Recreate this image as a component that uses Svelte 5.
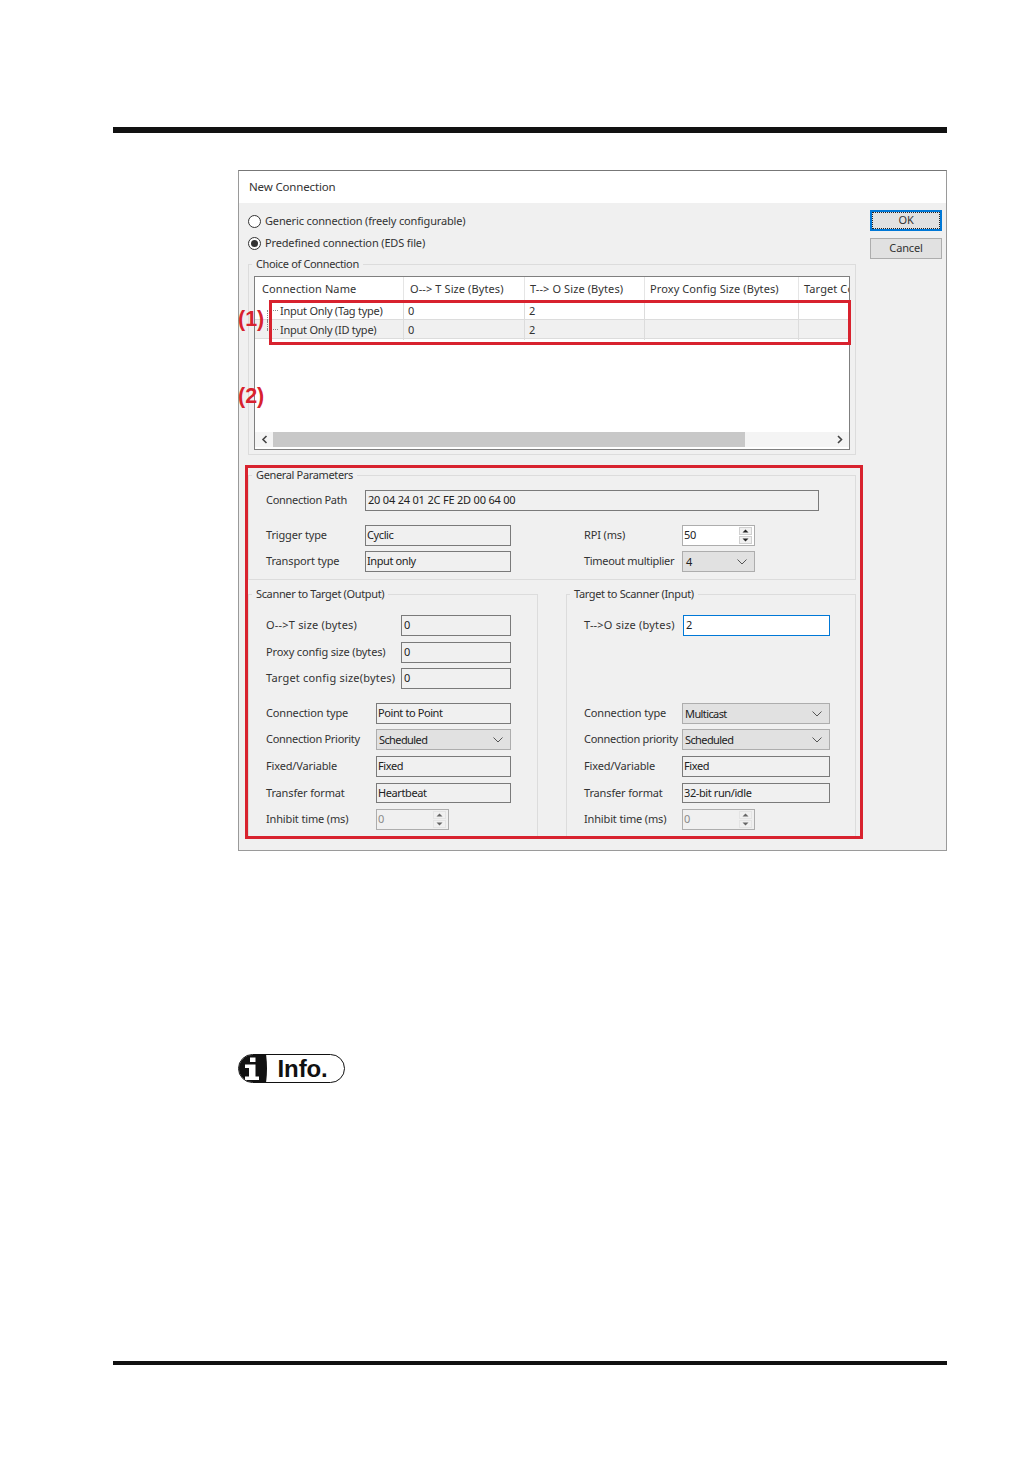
<script>
	const columns = ['Connection Name', 'O--> T Size (Bytes)', 'T--> O Size (Bytes)', 'Proxy Config Size (Bytes)', 'Target Config Size (Bytes)']
	const rows = [
		['Input Only (Tag type)', '0', '2', '', ''],
		['Input Only (ID type)', '0', '2', '', '']
	]
</script>

{#snippet text(value, width, cls = '')}
	<div class="field {width} {cls}">{value}</div>
{/snippet}

{#snippet combo(value, width)}
	<div class="field combo {width}">
		<span>{value}</span>
		<svg width="10" height="6" viewBox="0 0 10 6"><path d="M0.5 0.5 L5 5 L9.5 0.5" fill="none" stroke="#555" /></svg>
	</div>
{/snippet}

{#snippet spin(value, disabled)}
	<div class="field spin w73" class:disabled>
		<span>{value}</span>
		<div class="arrows">
			<svg width="13" height="7" viewBox="0 0 13 7"><path d="M3.5 5 L6.5 2 L9.5 5 Z" fill={disabled ? '#666' : '#222'} /></svg>
			<svg width="13" height="7" viewBox="0 0 13 7"><path d="M3.5 2 L6.5 5 L9.5 2 Z" fill={disabled ? '#666' : '#222'} /></svg>
		</div>
	</div>
{/snippet}

<div class="page">
	<div class="rule top"></div>

	<div class="content">
		<div class="dialog">
			<div class="title">New Connection</div>

			<div class="body">
				<div class="main">
					<label class="radio-row"><span class="radio"></span><span class="radio-text">Generic connection (freely configurable)</span></label>
					<label class="radio-row"><span class="radio on"></span><span class="radio-text">Predefined connection (EDS file)</span></label>

					<section class="group choice">
						<div class="legend">Choice of Connection</div>
						<div class="table">
							<div class="head tr">
								{#each columns as col}
									<div class="th">{col}</div>
								{/each}
							</div>
							{#each rows as row, i}
								<div class="tr item" class:alt={i === 1}>
									{#each row as cell, j}
										<div class="td" class:name={j === 0}>{cell}</div>
									{/each}
								</div>
							{/each}
							<div class="filler"></div>
							<div class="scrollbar">
								<svg width="18" height="15" viewBox="0 0 18 15"><path d="M11.5 4 L8 7.5 L11.5 11" fill="none" stroke="#444" stroke-width="1.6" /></svg>
								<div class="thumb"></div>
								<svg class="next" width="18" height="15" viewBox="0 0 18 15"><path d="M8 4 L11.5 7.5 L8 11" fill="none" stroke="#444" stroke-width="1.6" /></svg>
							</div>
						</div>
					</section>

					<section class="group general">
						<div class="legend">General Parameters</div>
						<div class="row path">
							<span class="label l99 tight">Connection Path</span>
							{@render text('20 04 24 01 2C FE 2D 00 64 00', 'w454')}
						</div>
						<div class="two m14">
							<div class="row">
								<span class="label l99">Trigger type</span>
								{@render text('Cyclic', 'w146')}
							</div>
							<div class="row">
								<span class="label l98">RPI (ms)</span>
								{@render spin('50', false)}
							</div>
						</div>
						<div class="two m5">
							<div class="row">
								<span class="label l99">Transport type</span>
								{@render text('Input only', 'w146')}
							</div>
							<div class="row">
								<span class="label l98 tight">Timeout multiplier</span>
								{@render combo('4', 'w73')}
							</div>
						</div>
					</section>

					<div class="columns">
						<section class="group side">
							<div class="legend">Scanner to Target (Output)</div>
							<div class="row first"><span class="label l135 loose">O-->T size (bytes)</span>{@render text('0', 'w110')}</div>
							<div class="row m6"><span class="label l135">Proxy config size (bytes)</span>{@render text('0', 'w110')}</div>
							<div class="row m5"><span class="label l135 loose">Target config size(bytes)</span>{@render text('0', 'w110')}</div>
							<div class="row m14"><span class="label l110">Connection type</span>{@render text('Point to Point', 'w135')}</div>
							<div class="row m5"><span class="label l110 tight">Connection Priority</span>{@render combo('Scheduled', 'w135')}</div>
							<div class="row m6"><span class="label l110">Fixed/Variable</span>{@render text('Fixed', 'w135')}</div>
							<div class="row m6 short"><span class="label l110">Transfer format</span>{@render text('Heartbeat', 'w135')}</div>
							<div class="row m6"><span class="label l110">Inhibit time (ms)</span>{@render spin('0', true)}</div>
						</section>

						<section class="group side">
							<div class="legend">Target to Scanner (Input)</div>
							<div class="row first"><span class="label l98 loose">T-->O size (bytes)</span>{@render text('2', 'w147', 'focus')}</div>
							<div class="row m67"><span class="label l98">Connection type</span>{@render combo('Multicast', 'w148')}</div>
							<div class="row m5"><span class="label l98 tight">Connection priority</span>{@render combo('Scheduled', 'w148')}</div>
							<div class="row m6"><span class="label l98">Fixed/Variable</span>{@render text('Fixed', 'w148')}</div>
							<div class="row m6 short"><span class="label l98">Transfer format</span>{@render text('32-bit run/idle', 'w148')}</div>
							<div class="row m6"><span class="label l98">Inhibit time (ms)</span>{@render spin('0', true)}</div>
						</section>
					</div>
				</div>

				<div class="buttons">
					<button class="default"><span>OK</span></button>
					<button>Cancel</button>
				</div>
			</div>

			<div class="callout box-one"></div>
			<div class="callout box-two"></div>
			<div class="mark mark-one">(1)</div>
			<div class="mark mark-two">(2)</div>
		</div>

		<div class="info">
			<svg class="info-icon" width="30" height="29" viewBox="0 0 30 29">
				<path d="M14.5 0 H28 Q30 14.5 28 29 H14.5 A14.5 14.5 0 0 1 14.5 0 Z" fill="#111" />
				<path d="M12 3.5 h5.5 v4.5 h-5.5 z M7 10.5 h10.5 v12 h3.5 v3.5 h-14 v-3.5 h4 v-8.5 h-4 z" fill="#fff" />
			</svg>
			<span class="info-text">Info.</span>
		</div>
	</div>

	<div class="rule bottom"></div>
</div>

<style>
	:global(body) {
		background: #fff;
	}

	.page {
		box-sizing: border-box;
		width: 1032px;
		height: 1457px;
		padding: 127px 85px 0 113px;
		overflow: hidden;
		font-family: 'Noto Sans', sans-serif;
		font-size: 11px;
		letter-spacing: -0.15px;
		color: #333;
	}

	.rule {
		background: #111;
	}

	.rule.top {
		height: 6px;
	}

	.rule.bottom {
		height: 4px;
		margin-top: 278px;
	}

	.content {
		padding: 37px 0 0 125px;
	}

	.dialog {
		position: relative;
		box-sizing: border-box;
		width: 709px;
		height: 681px;
		border: 1px solid #9a9a9a;
		border-top-color: #777;
		background: #f0f0f0;
	}

	.title {
		box-sizing: border-box;
		height: 32px;
		padding: 7px 0 0 10px;
		background: #fff;
		font-size: 11.5px;
		line-height: 17px;
	}

	.body {
		display: flex;
	}

	.main {
		width: 608px;
		margin-left: 9px;
		padding-top: 7px;
	}

	.radio-row {
		display: flex;
		align-items: center;
		gap: 4px;
		height: 22px;
	}

	.radio-text {
		margin-top: -2px;
	}

	.radio {
		position: relative;
		box-sizing: border-box;
		width: 13px;
		height: 13px;
		border: 1px solid #333;
		border-radius: 50%;
		background: #fff;
	}

	.radio.on::after {
		content: '';
		position: absolute;
		inset: 2px;
		border-radius: 50%;
		background: #333;
	}

	.group {
		border: 1px solid #dcdcdc;
	}

	.legend {
		width: fit-content;
		height: 16px;
		margin: -9px 0 0 3px;
		padding: 0 4px;
		background: #f0f0f0;
		line-height: 16px;
		letter-spacing: -0.35px;
		white-space: nowrap;
	}

	.choice {
		box-sizing: border-box;
		height: 191px;
		margin-top: 10px;
		padding: 0 5px;
	}

	.choice .legend {
		margin-left: -2px;
	}

	.table {
		display: flex;
		flex-direction: column;
		box-sizing: border-box;
		width: 596px;
		height: 174px;
		margin-top: 4px;
		border: 1px solid #7f7f7f;
		background: #fff;
		overflow: hidden;
	}

	.tr {
		display: grid;
		grid-template-columns: 149px 121px 120px 154px 50px;
		flex: none;
	}

	.head {
		height: 24px;
	}

	.th {
		padding: 3px 0 0 6px;
		border-right: 1px solid #e5e5e5;
		line-height: 17px;
		letter-spacing: 0.1px;
		white-space: nowrap;
	}

	.th:first-child {
		padding-left: 7px;
	}

	.th:nth-child(n + 3) {
		padding-left: 5px;
	}

	.th:last-child {
		border-right: 0;
		overflow: hidden;
	}

	.item {
		height: 19px;
		border-bottom: 1px solid #dcdcdc;
		box-sizing: border-box;
	}

	.item.alt {
		background: #f0f0f0;
	}

	.td {
		padding-left: 4px;
		border-right: 1px solid #dcdcdc;
		line-height: 20px;
		letter-spacing: -0.25px;
		white-space: nowrap;
	}

	.td.name {
		position: relative;
		padding-left: 25px;
	}

	.td.name::before {
		content: '';
		position: absolute;
		left: 12px;
		top: 9px;
		width: 11px;
		border-top: 1px dotted #888;
	}

	.td.name::after {
		content: '';
		position: absolute;
		left: 12px;
		top: 9px;
		bottom: -1px;
		border-left: 1px dotted #888;
	}

	.alt .td.name::after {
		top: 0;
		bottom: 9px;
	}

	.td:last-child {
		border-right: 0;
	}

	.filler {
		height: 93px;
		flex: none;
	}

	.scrollbar {
		display: flex;
		flex: none;
		height: 15px;
		background: #f4f4f4;
	}

	.thumb {
		width: 472px;
		background: #c8c8c8;
	}

	.next {
		margin-left: auto;
		margin-right: 1px;
	}

	.general {
		box-sizing: border-box;
		height: 105px;
		margin-top: 20px;
	}

	.row {
		display: flex;
		align-items: center;
		height: 21px;
	}

	.row.short {
		height: 20px;
	}

	.short .field {
		height: 20px;
	}

	.path {
		margin: 7px 0 0 17px;
	}

	.two {
		display: grid;
		grid-template-columns: 318px auto;
		padding-left: 17px;
	}

	.columns {
		display: flex;
		gap: 28px;
		margin-top: 14px;
	}

	.side {
		box-sizing: border-box;
		width: 290px;
		height: 244px;
		padding-left: 17px;
	}

	.side .legend {
		margin-left: -14px;
	}

	.first {
		margin-top: 13px;
	}

	.m5 { margin-top: 5px; }
	.m6 { margin-top: 6px; }
	.m14 { margin-top: 14px; }
	.m67 { margin-top: 67px; }

	.label {
		flex: none;
		margin-top: -2px;
		white-space: nowrap;
	}

	.loose { letter-spacing: 0.2px; }
	.tight { letter-spacing: -0.3px; }

	.l98 { width: 98px; }
	.l99 { width: 99px; }
	.l110 { width: 110px; }
	.l135 { width: 135px; }

	.field {
		display: flex;
		align-items: center;
		flex: none;
		box-sizing: border-box;
		height: 21px;
		padding: 0 0 2px 2px;
		border: 1px solid #7a7a7a;
		color: #222;
		letter-spacing: -0.4px;
		white-space: nowrap;
	}

	.w73 { width: 73px; }
	.w110 { width: 110px; }
	.w135 { width: 135px; padding-left: 1px; }
	.w146 { width: 146px; padding-left: 1px; }
	.w147 { width: 147px; }
	.w148 { width: 148px; padding-left: 1px; }
	.w454 { width: 454px; letter-spacing: -0.2px; }

	.focus {
		margin-left: 1px;
		border-color: #0078d7;
		background: #fff;
	}

	.combo {
		justify-content: space-between;
		padding: 0 7px 0 2px;
		border-color: #adadad;
		background: #e1e1e1;
		letter-spacing: -0.6px;
	}

	.combo.w73 {
		padding-left: 3px;
	}

	.spin {
		justify-content: space-between;
		padding: 0 2px 0 1px;
		border-color: #adadad;
		background: #fff;
	}

	.spin.disabled {
		background: #f0f0f0;
		color: #8a8a8a;
	}

	.spin span {
		margin-top: -2px;
	}

	.arrows {
		display: flex;
		flex-direction: column;
		gap: 1px;
		width: 13px;
	}

	.arrows svg {
		display: block;
		height: 8px;
		background: #f0f0f0;
		outline: 1px solid #d0d0d0;
		outline-offset: -1px;
	}

	.spin.disabled .arrows svg {
		outline-color: #e4e4e4;
	}

	.buttons {
		display: flex;
		flex-direction: column;
		gap: 7px;
		width: 72px;
		margin: 7px 0 0 14px;
	}

	button {
		box-sizing: border-box;
		height: 21px;
		padding: 0 0 2px;
		border: 1px solid #adadad;
		background: #e1e1e1;
		color: #333;
		font: inherit;
		letter-spacing: inherit;
	}

	.default {
		border: 2px solid #0078d7;
		padding: 0;
	}

	.default span {
		display: block;
		height: 15px;
		margin: 0 1px;
		line-height: 13px;
		outline: 1px dotted #222;
	}

	.callout {
		position: absolute;
		box-sizing: border-box;
		border: 3px solid #d8222e;
	}

	.box-one {
		left: 30px;
		top: 129px;
		width: 582px;
		height: 45px;
	}

	.box-two {
		left: 6px;
		top: 294px;
		width: 618px;
		height: 374px;
	}

	.mark {
		position: absolute;
		left: -1px;
		color: #d8222e;
		font: bold 21.5px/24px 'Liberation Sans', sans-serif;
		letter-spacing: 0;
	}

	.mark-one {
		top: 136px;
	}

	.mark-two {
		top: 213px;
	}

	.info {
		display: flex;
		align-items: center;
		box-sizing: border-box;
		width: 107px;
		height: 29px;
		margin-top: 203px;
		border: 1.5px solid #111;
		border-radius: 15px;
		overflow: hidden;
		position: relative;
	}

	.info-icon {
		flex: none;
		margin-left: -1.5px;
	}

	.info-text {
		margin-left: 10px;
		color: #111;
		font: bold 24px/26px 'Liberation Sans', sans-serif;
		letter-spacing: -0.1px;
	}
</style>
